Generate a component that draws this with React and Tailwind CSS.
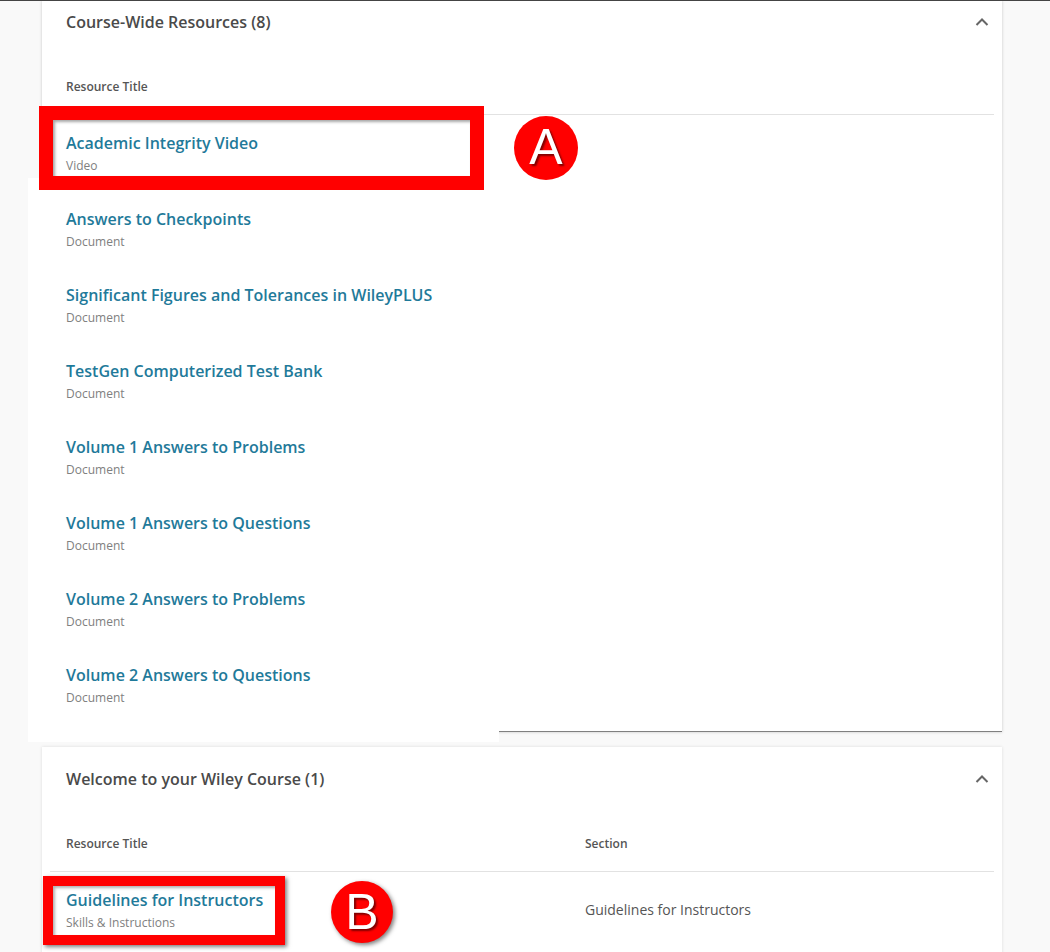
import React from "react";

const resources = [
  { title: "Academic Integrity Video", type: "Video" },
  { title: "Answers to Checkpoints", type: "Document" },
  { title: "Significant Figures and Tolerances in WileyPLUS", type: "Document" },
  { title: "TestGen Computerized Test Bank", type: "Document" },
  { title: "Volume 1 Answers to Problems", type: "Document" },
  { title: "Volume 1 Answers to Questions", type: "Document" },
  { title: "Volume 2 Answers to Problems", type: "Document" },
  { title: "Volume 2 Answers to Questions", type: "Document" },
];

const Chevron = () => (
  <svg width="14" height="10" viewBox="0 0 14 10" fill="none" className="text-[#666]">
    <path d="M1.5 8 L7 2.5 L12.5 8" stroke="currentColor" strokeWidth="2" />
  </svg>
);

const RowText = ({ title, type }) => (
  <div className="pt-[17px]">
    <div className="text-base leading-[22px] font-semibold text-[#1f7a9a] whitespace-nowrap">{title}</div>
    <div className="mt-[3px] text-xs leading-[18px] text-[#808080]">{type}</div>
  </div>
);

const App = () => {
  return (
    <div className="relative h-[952px] w-[1050px] overflow-hidden border-t border-t-[#444] bg-[#f9f9f9] font-['Open_Sans','Noto_Sans',sans-serif]">
      {/* white patch pasted over the first card */}
      <div className="absolute left-[28px] top-[177px] z-[5] h-[564px] w-[471px] bg-white"></div>

      <div className="ml-[42px] w-[960px]">
        {/* first card, top is scrolled off */}
        <section className="h-[731px] border-b border-b-[#808080] bg-white shadow-[0_0_3px_rgba(0,0,0,0.2)]">
          <div className="relative z-10 flex h-[42px] items-center justify-between pl-6 pr-[13px]">
            <h2 className="text-base font-semibold text-[#4a4a4a]">Course-Wide Resources (8)</h2>
            <Chevron />
          </div>
          <div className="mx-2 flex h-[72px] items-center border-b border-b-[#e2e2e2] pl-4 pt-[17px]">
            <span className="relative z-10 text-xs font-semibold text-[#555]">Resource Title</span>
          </div>
          <div className="relative z-10 pl-6">
            {resources.map((r) => (
              <div key={r.title} className="h-[76px]">
                <RowText title={r.title} type={r.type} />
              </div>
            ))}
          </div>
        </section>

        {/* second card */}
        <section className="mt-[15px] h-[300px] bg-white shadow-[0_0_3px_rgba(0,0,0,0.12)]">
          <div className="flex h-[64px] items-center justify-between pl-6 pr-[13px]">
            <h2 className="text-base font-semibold text-[#4a4a4a]">Welcome to your Wiley Course (1)</h2>
            <Chevron />
          </div>
          <div className="mx-2 grid h-[61px] grid-cols-[519px_1fr] items-center border-b border-b-[#e2e2e2] pl-4 pt-[6px] text-xs font-semibold text-[#555]">
            <span>Resource Title</span>
            <span>Section</span>
          </div>
          <div className="grid h-[76px] grid-cols-[519px_1fr] items-center pl-6">
            <div className="self-start">
              <RowText title="Guidelines for Instructors" type="Skills & Instructions" />
            </div>
            <div className="text-sm text-[#555]">Guidelines for Instructors</div>
          </div>
        </section>
      </div>

      {/* annotations */}
      <div className="absolute left-[39px] top-[105px] z-20 h-[84px] w-[445px] border-[14px] border-[#ff0000] shadow-[inset_2px_2px_3px_rgba(0,0,0,0.35)]"></div>
      <div className="absolute left-[514px] top-[115px] z-20 flex h-16 w-16 items-center justify-center rounded-full bg-[#ff0000] pb-[2px] font-['Liberation_Sans',sans-serif] text-[50px] text-white [text-shadow:2px_2px_2px_rgba(0,0,0,0.5)]">A</div>
      <div className="absolute left-[43px] top-[875px] z-20 h-[69px] w-[242px] border-[10px] border-[#ff0000] shadow-[2px_2px_4px_rgba(0,0,0,0.5),inset_2px_2px_3px_rgba(0,0,0,0.3)]"></div>
      <div className="absolute left-[331px] top-[880px] z-20 flex h-[62px] w-[62px] items-center justify-center rounded-full bg-[#ff0000] font-['Liberation_Sans',sans-serif] text-[50px] text-white shadow-[2px_2px_4px_rgba(0,0,0,0.5)] [text-shadow:2px_2px_2px_rgba(0,0,0,0.5)]">B</div>
    </div>
  );
};

export default App;
